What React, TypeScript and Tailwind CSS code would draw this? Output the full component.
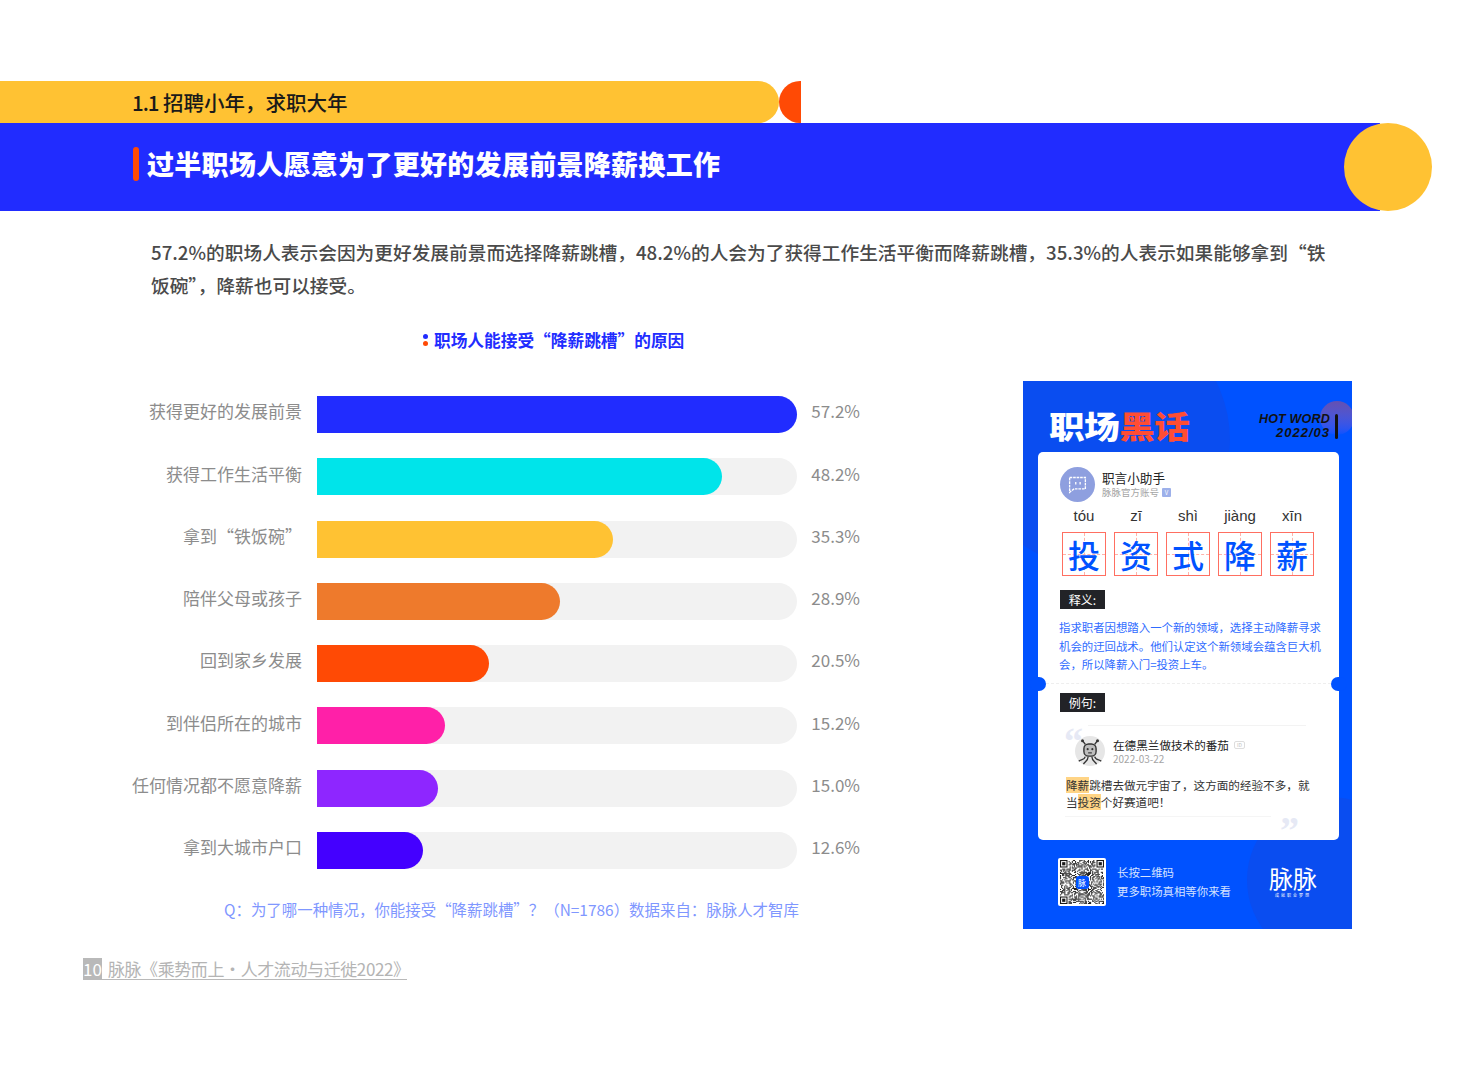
const rows = [
  { label: "获得更好的发展前景", value: "57.2%", width: "w-[480px]", color: "bg-[#212cff]" },
  { label: "获得工作生活平衡", value: "48.2%", width: "w-[405px]", color: "bg-[#00e4ea]" },
  { label: "拿到“铁饭碗”", value: "35.3%", width: "w-[296px]", color: "bg-[#ffc233]" },
  { label: "陪伴父母或孩子", value: "28.9%", width: "w-[243px]", color: "bg-[#ee7a2c]" },
  { label: "回到家乡发展", value: "20.5%", width: "w-[172px]", color: "bg-[#ff4a05]" },
  { label: "到伴侣所在的城市", value: "15.2%", width: "w-[128px]", color: "bg-[#ff20a8]" },
  { label: "任何情况都不愿意降薪", value: "15.0%", width: "w-[121px]", color: "bg-[#8e26ff]" },
  { label: "拿到大城市户口", value: "12.6%", width: "w-[106px]", color: "bg-[#4400ff]" },
];

const words = [
  { py: "tóu", han: "投" },
  { py: "zī", han: "资" },
  { py: "shì", han: "式" },
  { py: "jiàng", han: "降" },
  { py: "xīn", han: "薪" },
];

// fake qr modules, seeded so the picture stays the same between runs
const QrCode = () => {
  const size = 41;
  const cells: { x: number; y: number }[] = [];
  let seed = 7;
  for (let y = 0; y < size; y++) {
    for (let x = 0; x < size; x++) {
      seed = (seed * 1103515245 + 12345) & 0x7fffffff;
      const corner = (x < 8 && y < 8) || (x > 32 && y < 8) || (x < 8 && y > 32);
      if (!corner && (seed >> 16) % 2 === 0) cells.push({ x, y });
    }
  }
  const finder = (x: number, y: number) => (
    <g key={`${x}-${y}`}>
      <rect x={x} y={y} width="7" height="7" fill="#1a1a1a" />
      <rect x={x + 1} y={y + 1} width="5" height="5" fill="#fff" />
      <rect x={x + 2} y={y + 2} width="3" height="3" fill="#1a1a1a" />
    </g>
  );
  return (
    <svg viewBox="0 0 41 41" className="w-[44px] h-[44px]">
      {cells.map((c) => (
        <rect key={`${c.x}_${c.y}`} x={c.x} y={c.y} width="1" height="1" fill="#1a1a1a" />
      ))}
      {finder(0, 0)}
      {finder(34, 0)}
      {finder(0, 34)}
    </svg>
  );
};

const Robot = () => (
  <svg viewBox="0 0 32 32" className="w-[30px] h-[32px]">
    <circle cx="16" cy="16" r="16" fill="#e6e6e6" />
    <path d="M11 9 8 5M21 9l3-4" stroke="#333" strokeWidth="1.5" fill="none" />
    <circle cx="8" cy="5" r="1.6" fill="#333" />
    <circle cx="24" cy="5" r="1.6" fill="#333" />
    <rect x="9.5" y="8.5" width="13" height="13" rx="5" fill="#bdbdbd" stroke="#333" strokeWidth="1.5" />
    <circle cx="13.5" cy="14" r="1.1" fill="#333" />
    <circle cx="18.5" cy="14" r="1.1" fill="#333" />
    <path d="M14 18h4" stroke="#333" strokeWidth="1.2" />
    <path d="M11 22c-1 4-5 3-7 5M14 22c0 4-3 5-5 8M18 22c0 4 3 5 5 8M21 22c1 4 5 3 7 5" stroke="#333" strokeWidth="1.4" fill="none" />
  </svg>
);

const TagLabel = ({ text }: { text: string }) => (
  <div className="w-[45px] h-[19px] bg-[#222327] text-white text-[12px] leading-[19px] text-center">{text}</div>
);

const Poster = () => (
  <div className="relative w-[329px] h-[548px] bg-[#0052ff] overflow-hidden">
    <div className="absolute left-[-53px] top-[-71px] w-[260px] h-[260px] rounded-full bg-[#0a4df0]"></div>
    <div className="absolute left-[224px] top-[416px] w-[166px] h-[166px] rounded-full bg-[#0a4df0]"></div>
    <div className="absolute left-[297px] top-[20px] w-[34px] h-[34px] rounded-full bg-linear-to-b from-[#7d4f9e]/80 to-[#0052ff]"></div>

    <div className="relative h-[71px] pl-[26px] pr-[14px] flex justify-between items-start">
      <div className="mt-[22px] origin-left scale-x-[1.15] text-[31px] leading-[44px] font-black tracking-[-0.5px] text-white">
        职场<span className="text-[#ff4d33]">黑话</span>
      </div>
      <div className="mt-[31px] flex items-center gap-[5px]">
        <div className="text-right leading-[14px] font-bold italic text-[#111] font-['Liberation_Sans']">
          <p className="text-[12.5px] tracking-[0.2px]">HOT WORD</p>
          <p className="text-[13px] tracking-[1px]">2022/03</p>
        </div>
        <div className="w-[3px] h-[25px] rounded-full bg-[#111]"></div>
      </div>
    </div>

    <div className="relative mx-[15px] w-[301px] h-[388px] bg-white rounded-[5px]">
      <div className="flex pl-[22px] pt-[15px] gap-[7px]">
        <div className="w-[35px] h-[35px] rounded-full bg-[#8e9fdf] flex items-center justify-center">
          <svg viewBox="0 0 24 24" className="w-[21px] h-[21px]" fill="none" stroke="#fff" strokeWidth="1.5">
            <path d="M3 4h18v13H8l-5 4z" strokeDasharray="3 1" />
            <path d="M10 9v3M15 9v3" />
          </svg>
        </div>
        <div className="mt-[3px]">
          <p className="text-[12.6px] leading-[17px] mt-[-1px] text-[#222]">职言小助手</p>
          <div className="flex items-center gap-[3px]">
            <p className="text-[9.5px] leading-[12px] text-[#a5a5a5]">脉脉官方账号</p>
            <div className="w-[9px] h-[9px] rounded-[1px] bg-[#9db0ea] text-[6px] leading-[9px] text-center text-white">V</div>
          </div>
        </div>
      </div>

      <div className="flex pl-[24px] gap-[8px] mt-[5px]">
        {words.map((w) => (
          <div key={w.han} className="w-[44px]">
            <p className="h-[22px] text-center text-[15px] leading-[18px] text-[#333] font-['Liberation_Sans']">{w.py}</p>
            <div className="relative mt-[3px] w-[44px] h-[44px] border border-[#ff6f61] flex items-center justify-center">
              <div className="absolute left-0 right-0 top-1/2 border-t border-dashed border-[#ffb3aa]"></div>
              <div className="absolute top-0 bottom-0 left-1/2 border-l border-dashed border-[#ffb3aa]"></div>
              <span className="relative text-[32px] leading-none font-medium text-[#0052ff]">{w.han}</span>
            </div>
          </div>
        ))}
      </div>

      <div className="ml-[22px] mt-[14px]">
        <TagLabel text="释义:" />
      </div>
      <p className="ml-[21px] w-[264px] mt-[9px] text-[11.4px] leading-[18.5px] text-[#2f6bff]">
        指求职者因想踏入一个新的领域，选择主动降薪寻求机会的迂回战术。他们认定这个新领域会蕴含巨大机会，所以降薪入门=投资上车。
      </p>

      <div className="mx-[8px] mt-[9px] border-t border-dashed border-[#eeeeee]"></div>
      <div className="absolute left-[-8px] top-[225px] w-[16px] h-[14px] rounded-full bg-[#0052ff]"></div>
      <div className="absolute right-[-8px] top-[225px] w-[16px] h-[14px] rounded-full bg-[#0052ff]"></div>

      <div className="ml-[22px] mt-[9px]">
        <TagLabel text="例句:" />
      </div>
      <div className="relative">
        <span className="absolute left-[26px] top-[-3px] text-[38px] leading-none font-bold text-[#e6e9f5] font-['Liberation_Serif']">“</span>
        <div className="ml-[50px] mr-[33px] mt-[13px] border-t border-[#f3f3f3]"></div>
      </div>
      <div className="flex ml-[37px] mt-[9px] gap-[8px]">
        <Robot />
        <div className="mt-[2px]">
          <div className="flex items-center gap-[5px]">
            <p className="text-[11.6px] leading-[16px] text-[#222]">在德黑兰做技术的番茄</p>
            <div className="w-[11px] h-[8px] rounded-[2px] border border-[#dddddd] text-[5px] leading-[6px] text-center text-[#bbbbbb]">ID</div>
          </div>
          <p className="text-[10px] leading-[11px] text-[#a5a5a5]">2022-03-22</p>
        </div>
      </div>
      <p className="ml-[28px] w-[250px] mt-[10px] text-[11.6px] leading-[17.5px] text-[#333]">
        <span className="bg-[#ffd485]">降薪</span>跳槽去做元宇宙了，这方面的经验不多，就当<span className="bg-[#ffd485]">投资</span>个好赛道吧！
      </p>
      <div className="relative">
        <div className="ml-[27px] mr-[68px] mt-[4px] border-t border-[#f5f5f5]"></div>
        <span className="absolute left-[242px] top-[-5px] text-[38px] leading-none font-bold text-[#e6e9f5] font-['Liberation_Serif']">”</span>
      </div>
    </div>

    <div className="relative flex items-center pl-[35px] pt-[18px]">
      <div className="w-[48px] h-[48px] bg-white rounded-[2px] flex items-center justify-center relative">
        <QrCode />
        <div className="absolute w-[13px] h-[13px] rounded-[3px] bg-[#0052ff] text-white text-[8px] leading-[13px] text-center">脉</div>
      </div>
      <div className="ml-[11px] text-[11.4px] leading-[19px] text-[#d5e2ff]">
        <p>长按二维码</p>
        <p>更多职场真相等你来看</p>
      </div>
      <div className="ml-[38px] text-center text-white">
        <p className="text-[24px] leading-[24px] font-normal">脉脉</p>
        <p className="mt-[3px] text-[4px] leading-[5px] tracking-[2px]">成就职业梦想</p>
      </div>
    </div>
  </div>
);

export default function App() {
  return (
    <div className="w-[1465px] h-[1079px] bg-white pt-[81px] overflow-hidden font-['Noto_Sans_CJK_SC',sans-serif]">
      <div className="flex h-[42px]">
        <div className="w-[779px] h-full bg-[#ffc233] rounded-r-[21px] pl-[132px] text-[20.5px] leading-[42px] font-medium text-[#1a1a1a]">
          <span className="tracking-[-1px]">1.1</span> 招聘小年，求职大年
        </div>
        <div className="w-[22px] h-full bg-[#ff4a05] rounded-l-[21px]"></div>
      </div>

      <div className="relative h-[88px] w-[1380px] bg-[#212cff] flex items-center pl-[133px] pb-[6px]">
        <div className="w-[6px] h-[34px] rounded-full bg-[#ff4a05]"></div>
        <h1 className="ml-[8px] text-[27px] leading-[40px] font-black text-white tracking-[0.3px]">过半职场人愿意为了更好的发展前景降薪换工作</h1>
        <div className="absolute right-[-52px] top-0 w-[88px] h-[88px] rounded-full bg-[#ffc233]"></div>
      </div>

      <p className="ml-[151px] w-[1180px] mt-[24px] text-[18.7px] leading-[33px] font-medium text-[#4a4a4a]">
        57.2%的职场人表示会因为更好发展前景而选择降薪跳槽，48.2%的人会为了获得工作生活平衡而降薪跳槽，35.3%的人表示如果能够拿到“铁饭碗”，降薪也可以接受。
      </p>

      <div className="flex items-center ml-[423px] mt-[26px] h-[26px]">
        <div className="flex flex-col gap-[2px] mr-[6px]">
          <div className="w-[5px] h-[5px] rounded-full bg-[#212cff]"></div>
          <div className="w-[5px] h-[5px] rounded-full bg-[#ff4a05]"></div>
        </div>
        <h2 className="text-[16.7px] leading-[26px] font-bold text-[#212cff]">职场人能接受“降薪跳槽”的原因</h2>
      </div>

      <div className="flex mt-[28px]">
        <div className="w-[1023px] pt-[15px]">
          <div className="flex flex-col gap-[25.3px]">
            {rows.map((r) => (
              <div key={r.label} className="flex items-center h-[37px]">
                <p className="w-[302px] pb-[7px] text-right text-[17px] text-[#8c8c8c]">{r.label}</p>
                <div className="ml-[15px] w-[480px] h-full bg-[#f2f2f2] rounded-r-[18.5px]">
                  <div className={`${r.width} h-full ${r.color} rounded-r-[18.5px]`}></div>
                </div>
                <p className="w-[63px] pb-[7px] text-right text-[17px] text-[#8c8c8c]">{r.value}</p>
              </div>
            ))}
          </div>
          <p className="ml-[224px] mt-[28px] text-[15.45px] leading-[24px] text-[#7f97ff]">
            Q：为了哪一种情况，你能接受“降薪跳槽”？（N=1786）数据来自：脉脉人才智库
          </p>
          <div className="ml-[83px] mt-[37px] w-[324px] flex items-center border-b border-[#b9b9b9] text-[17px] leading-[21px] text-[#b4b4b4] whitespace-nowrap">
            <span className="w-[22px] bg-[#b9b9b9] text-white text-center">10</span>
            <span className="ml-[6px] tracking-[-0.4px]">脉脉《乘势而上·人才流动与迁徙2022》</span>
          </div>
        </div>
        <Poster />
      </div>
    </div>
  );
}
